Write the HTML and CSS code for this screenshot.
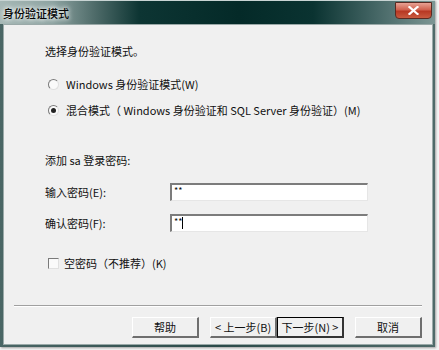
FILE: index.html
```html
<!DOCTYPE html>
<html>
<head>
<meta charset="utf-8">
<link rel="stylesheet" href="styles.css">
</head>
<body>
<div class="window">
  <div class="titlebar">
    <span class="title">身份验证模式</span>
    <span class="close"><svg width="11" height="9" viewBox="0 0 11 9"><path d="M1.5 1 L9.5 8 M9.5 1 L1.5 8" stroke="#fff" stroke-width="2.2" stroke-linecap="square"/></svg></span>
  </div>
  <div class="client">
    <div class="content">
      <div class="heading">选择身份验证模式。</div>
      <div class="options">
        <label class="opt"><span class="radio"></span><span>Windows 身份验证模式(W)</span></label>
        <label class="opt"><span class="radio checked"></span><span>混合模式（ Windows 身份验证和 SQL Server 身份验证）(M)</span></label>
      </div>
      <div class="pwd-title">添加 sa 登录密码:</div>
      <div class="fields">
        <div class="field"><span class="flabel">输入密码(E):</span><span class="input">**</span></div>
        <div class="field"><span class="flabel">确认密码(F):</span><span class="input">**<span class="caret"></span></span></div>
      </div>
      <label class="chk"><span class="box"></span><span>空密码（不推荐）(K)</span></label>
    </div>
    <div class="sep"></div>
    <div class="buttons">
      <span class="btn">帮助</span>
      <span class="btn gapl">&lt; 上一步(B)</span>
      <span class="btn def">下一步(N) &gt;</span>
      <span class="btn gapl">取消</span>
    </div>
  </div>
</div>
</body>
</html>
```
FILE: styles.css
```css
html, body {
  margin: 0;
  padding: 0;
  background: #f4f4f4;
}
body {
  width: 439px;
  height: 350px;
  font-family: "Noto Sans CJK SC", "Liberation Sans", sans-serif;
  font-size: 11px;
  color: #111;
}
.window {
  width: 435px;
  height: 347px;
  box-sizing: border-box;
  background: linear-gradient(90deg, #4a6665 0%, #2b4a49 50%, #4f6a69 100%);
  display: flex;
  flex-direction: column;
  padding: 0 2px 2px 3px;
  box-shadow: 1px 1px 2px rgba(0,0,0,0.35);
}
.titlebar {
  height: 24px;
  margin: 0 -2px 0 -3px;
  display: flex;
  align-items: flex-start;
  justify-content: space-between;
  background: linear-gradient(90deg, #a6b8b6 0%, #8ea4a2 12%, #4d6a68 22%, #0d3533 32%, #042a28 55%, #0a3331 72%, #3f6160 85%, #7d9694 100%);
  border-top: 1px solid #c8d4d3;
  box-sizing: border-box;
}
.title {
  margin: 4px 0 0 3px;
  font-size: 11px;
  font-weight: 500;
  color: #050505;
  text-shadow: 0 0 4px #fff, 0 0 6px #fff;
}
.close {
  width: 37px;
  height: 17px;
  margin: 1px 3px 0 0;
  box-sizing: border-box;
  border: 1px solid #5a2a22;
  border-radius: 0 0 4px 4px;
  background: linear-gradient(180deg, #e8a294 0%, #d0614e 45%, #b73823 55%, #c95a3f 100%);
  display: flex;
  align-items: center;
  justify-content: center;
}
.client {
  flex: 1;
  background: #f0f0f0;
  border: 1px solid #9aa9a8;
  display: flex;
  flex-direction: column;
}
.content {
  flex: 1;
  padding: 18px 0 0 41px;
  display: flex;
  flex-direction: column;
}
.heading {
  line-height: 16px;
}
.options {
  margin-top: 17px;
  display: flex;
  flex-direction: column;
  gap: 10px;
  margin-left: 3px;
}
.opt, .chk {
  display: flex;
  align-items: center;
  gap: 7px;
  line-height: 16px;
}
.radio {
  width: 9px;
  height: 9px;
  border-radius: 50%;
  border: 1px solid #8c8c8c;
  border-color: #7a7a7a #e0e0e0 #e0e0e0 #7a7a7a;
  background: #fafafa;
  position: relative;
}
.radio.checked::after {
  content: "";
  position: absolute;
  left: 2px;
  top: 2px;
  width: 5px;
  height: 5px;
  border-radius: 50%;
  background: #222;
}
.pwd-title {
  margin-top: 34px;
  line-height: 16px;
}
.fields {
  margin-top: 15px;
  display: flex;
  flex-direction: column;
  gap: 13px;
}
.field {
  display: flex;
  align-items: center;
}
.flabel {
  width: 125px;
  line-height: 16px;
}
.input {
  width: 198px;
  height: 18px;
  box-sizing: border-box;
  background: #fff;
  border-top: 2px solid #7c7c7c;
  border-left: 2px solid #7c7c7c;
  border-right: 1px solid #e6e6e6;
  border-bottom: 1px solid #e6e6e6;
  font-size: 9px;
  line-height: 11px;
  padding-left: 2px;
  display: flex;
  align-items: flex-start;
}
.caret {
  width: 1px;
  height: 12px;
  background: #000;
  margin-left: 0;
  margin-top: 1px;
}
.chk {
  margin-top: 23px;
  margin-left: 3px;
  gap: 5px;
}
.box {
  width: 9px;
  height: 9px;
  border: 1px solid;
  border-color: #7a7a7a #e0e0e0 #e0e0e0 #7a7a7a;
  background: #fafafa;
}
.sep {
  margin: 0 10px 0 10px;
  height: 0;
  border-top: 1px solid #a0a0a0;
  border-bottom: 1px solid #fff;
}
.buttons {
  display: flex;
  justify-content: flex-end;
  padding: 10px 10px 6px 0;
}
.btn {
  width: 67px;
  height: 21px;
  box-sizing: border-box;
  display: flex;
  align-items: center;
  justify-content: center;
  background: #f0f0f0;
  border-top: 1px solid #fff;
  border-left: 1px solid #fff;
  border-right: 2px solid #6e6e6e;
  border-bottom: 2px solid #6e6e6e;
  font-size: 11px;
}
.gapl {
  margin-left: 11px;
}
.def {
  border: 1px solid #000;
  border-right: 2px solid #333;
  border-bottom: 2px solid #333;
}
```
